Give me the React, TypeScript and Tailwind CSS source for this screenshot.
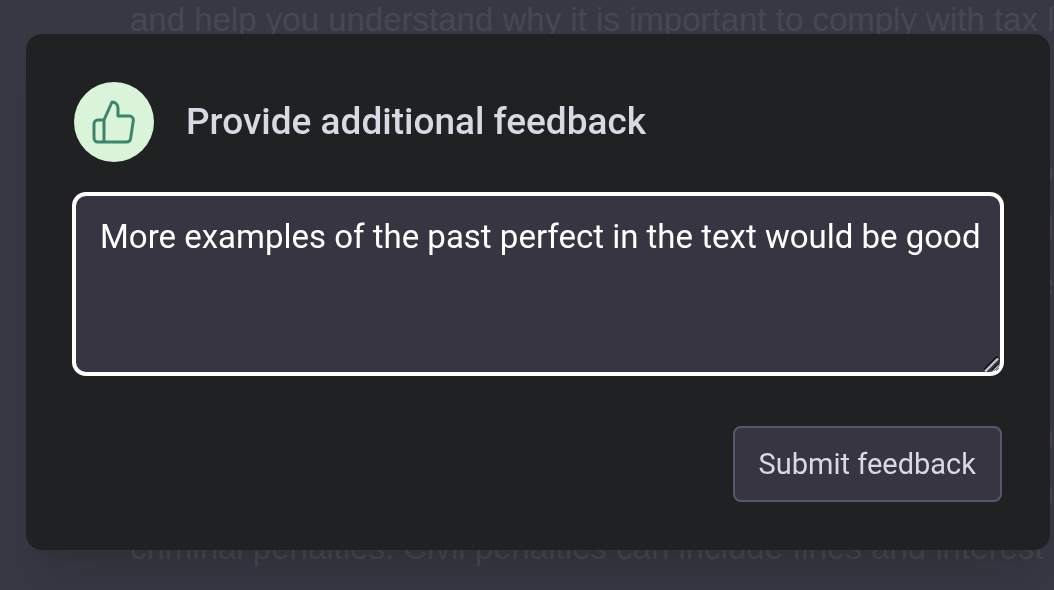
import { useState } from "react";
import type { FormEvent } from "react";

// Article behind the dialog, one array per paragraph. Only the line ends show past the card.
const PARAGRAPHS: { text: string; end?: boolean }[][] = [
  [
    { text: "and help you understand why it is important to comply with tax l" },
    { text: "" },
  ],
  [
    { text: "o", end: true },
    { text: "l", end: true },
    { text: "e", end: true },
    { text: "" },
  ],
  [
    { text: "n", end: true },
    { text: "n", end: true },
    { text: "criminal penalties. Civil penalties can include fines and interest c" },
  ],
];

function Article() {
  return (
    <main
      aria-hidden="true"
      className="h-screen space-y-10 overflow-hidden pl-[130px] font-['Liberation_Sans',sans-serif] text-[33px] leading-[56px] whitespace-nowrap text-[#464751]"
    >
      {PARAGRAPHS.map((lines, i) => (
        <div key={i} className={i === 0 ? "-mt-2" : ""}>
          {lines.map((line, j) => (
            <p key={j} className={line.end ? "h-14 text-right" : "h-14"}>
              {line.text}
            </p>
          ))}
        </div>
      ))}
    </main>
  );
}

function ThumbsUp() {
  return (
    <svg
      viewBox="0 0 24 24"
      className="size-12"
      fill="none"
      stroke="currentColor"
      strokeWidth="1.5"
      strokeLinecap="round"
      strokeLinejoin="round"
      aria-hidden="true"
    >
      <path d="M14 9V5a3 3 0 0 0-3-3l-4 9v11h11.28a2 2 0 0 0 2-1.7l1.38-9a2 2 0 0 0-2-2.3zM7 22H4a2 2 0 0 1-2-2v-7a2 2 0 0 1 2-2h3" />
    </svg>
  );
}

// Sits over the native resize corner, clicks go through to it.
function ResizeGrip() {
  return (
    <svg
      viewBox="0 0 16 16"
      className="pointer-events-none absolute right-0.5 bottom-0.5 size-4 rounded-br-xl"
      fill="none"
      aria-hidden="true"
    >
      <path d="M0 14 13.5.5M8 14.5 14 8.5" stroke="#111113" strokeWidth="2" />
      <path d="M1 15.5 14 2.5" stroke="#c4c4c4" strokeWidth="2.4" />
      <path d="M9.5 16 15.5 10" stroke="#c4c4c4" strokeWidth="3.4" />
    </svg>
  );
}

function FeedbackDialog() {
  const [feedback, setFeedback] = useState(
    "More examples of the past perfect in the text would be good"
  );

  function submit(e: FormEvent) {
    e.preventDefault();
    setFeedback("");
  }

  return (
    <div className="fixed inset-0 flex items-start pt-[34px] pr-1 pl-[26px]">
      <form
        role="dialog"
        aria-labelledby="feedback-title"
        onSubmit={submit}
        className="w-full rounded-2xl bg-[#202123] p-12 shadow-[0_40px_50px_-10px_rgba(0,0,0,0.1),0_16px_20px_-12px_rgba(0,0,0,0.1)]"
      >
        <div className="flex items-center gap-8">
          <div className="flex size-20 shrink-0 items-center justify-center rounded-full bg-[#daf4d9] text-[#3c846c]">
            <ThumbsUp />
          </div>
          <h2 id="feedback-title" className="text-[37px] font-medium text-[#d9d9e3]">
            <label htmlFor="feedback">Provide additional feedback</label>
          </h2>
        </div>

        <div className="relative mt-8">
          <textarea
            id="feedback"
            value={feedback}
            onChange={(e) => setFeedback(e.target.value)}
            spellCheck={false}
            className="block h-[180px] w-full rounded-xl border-2 border-white bg-[#363541] py-4 pr-4 pl-6 text-[33px] leading-[50px] text-white ring-2 ring-white outline-none"
          />
          <ResizeGrip />
        </div>

        <div className="mt-[52px] flex justify-end">
          <button
            type="submit"
            className="rounded-lg border-2 border-[#565869] bg-[#363541] px-6 py-4 text-[29px] leading-10 text-[#d9d9e3] hover:bg-[#40414f]"
          >
            Submit feedback
          </button>
        </div>
      </form>
    </div>
  );
}

export default function App() {
  return (
    <div className="min-h-screen bg-[#383844] font-['Roboto',sans-serif]">
      <Article />
      <FeedbackDialog />
    </div>
  );
}
